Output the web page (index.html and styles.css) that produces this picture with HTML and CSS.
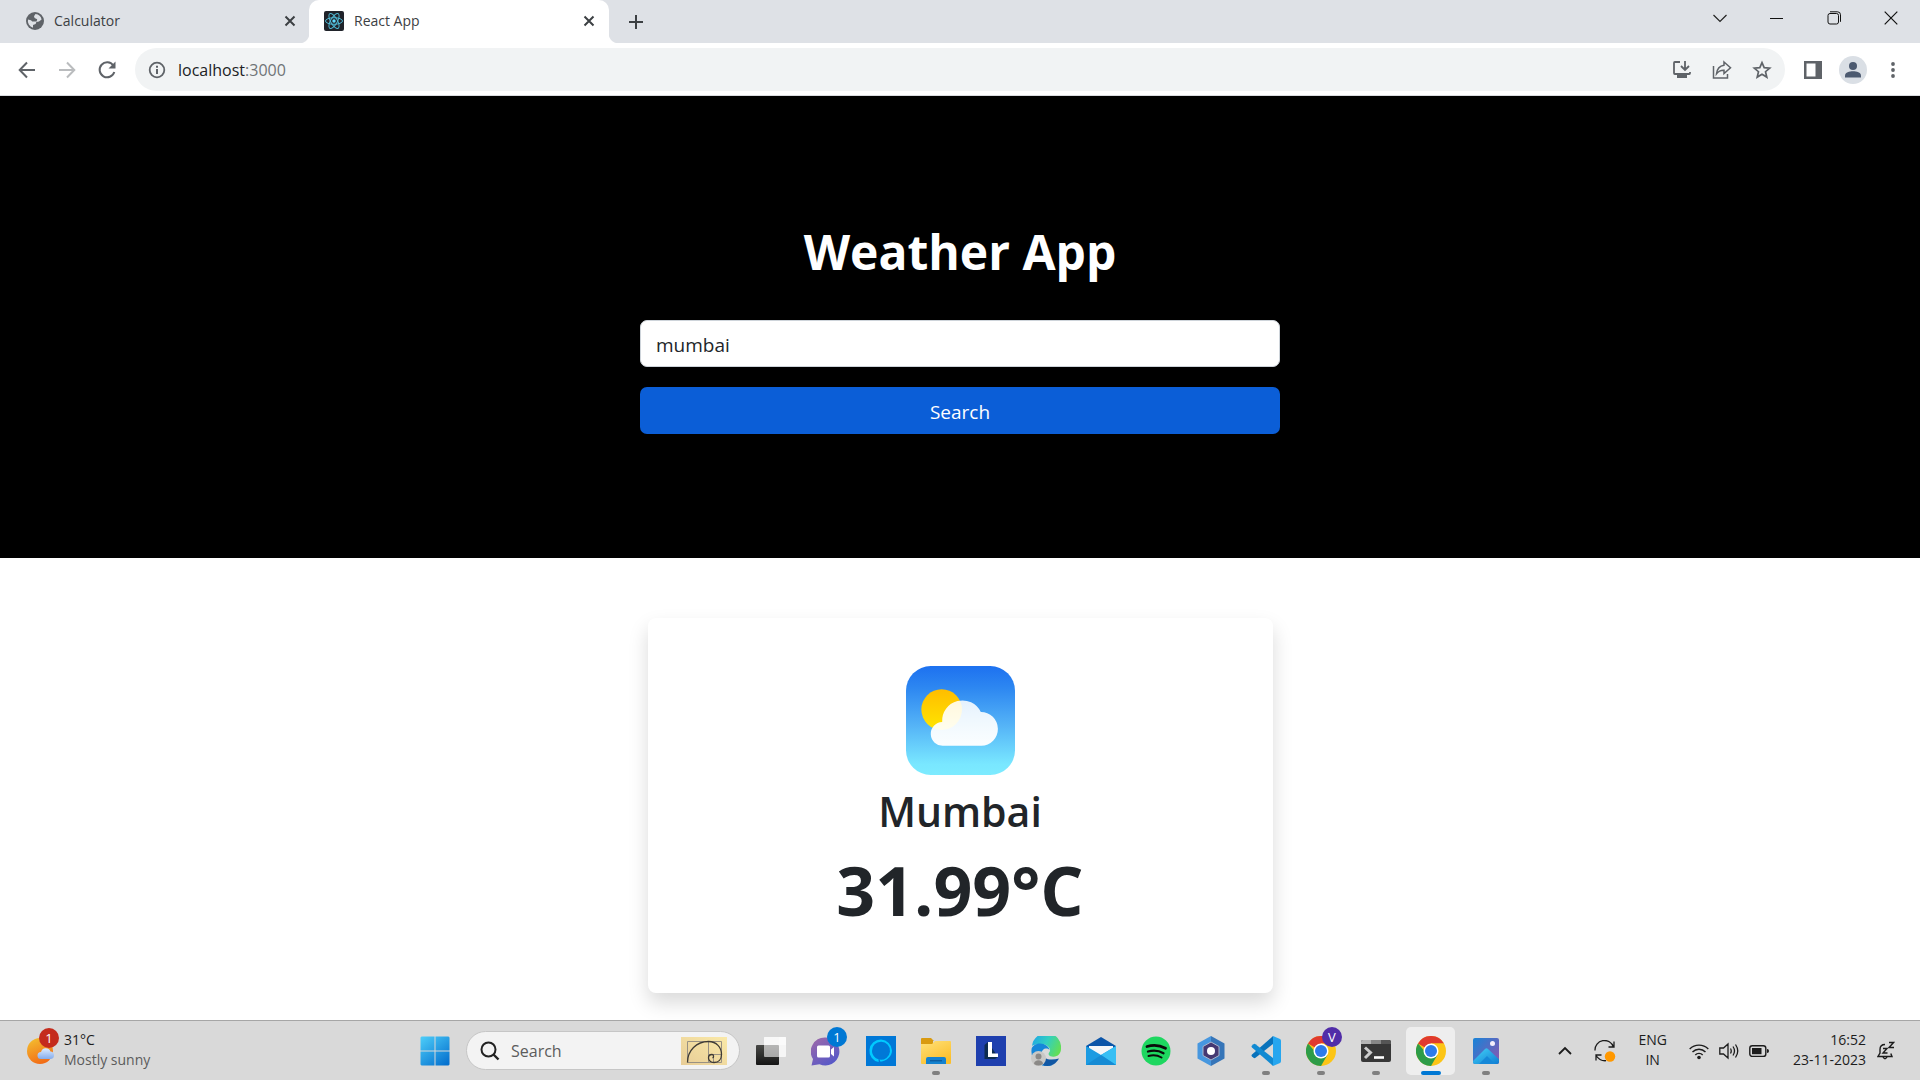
FILE: index.html
```html
<!DOCTYPE html>
<html lang="en">
<head>
<meta charset="utf-8">
<meta name="viewport" content="width=device-width, initial-scale=1">
<title>React App</title>
<link rel="stylesheet" href="styles.css">
</head>
<body>
<header class="browser">
  <div class="tabstrip">
    <div class="tab">
      <svg width="18" height="18" viewBox="0 0 18 18"><circle cx="9" cy="9" r="9" fill="#5f6368"/><path d="M9.500 2 8 4.200 8.600 6l2.600 1.200-.6 2.400H6.200L5 8.200 2 7.400a7 7 0 0 0 5 8.300v-2.600l2.600-1.200.8-1.900 2.600-.6 2.600-1.800A7 7 0 0 0 9.500 2z" fill="#dee1e6"/></svg>
      <span class="tab-title">Calculator</span>
      <button class="tab-close" aria-label="Close Calculator"><svg width="12" height="12" viewBox="0 0 12 12"><path d="M1.500 1.500l9 9M10.500 1.500l-9 9" stroke="#3c4043" stroke-width="2"/></svg></button>
    </div>
    <div class="tab active">
      <svg width="20" height="20" viewBox="0 0 20 20"><rect width="20" height="20" rx="2" fill="#20232a"/><g fill="none" stroke="#4fb8d3" stroke-width="1"><ellipse cx="10" cy="10" rx="8.500" ry="3.300"/><ellipse cx="10" cy="10" rx="8.500" ry="3.300" transform="rotate(60 10 10)"/><ellipse cx="10" cy="10" rx="8.500" ry="3.300" transform="rotate(120 10 10)"/></g><circle cx="10" cy="10" r="1.700" fill="#61dafb"/></svg>
      <span class="tab-title">React App</span>
      <button class="tab-close" aria-label="Close React App"><svg width="12" height="12" viewBox="0 0 12 12"><path d="M1.500 1.500l9 9M10.500 1.500l-9 9" stroke="#3c4043" stroke-width="2"/></svg></button>
    </div>
    <button class="new-tab" aria-label="New tab"><svg width="16" height="16" viewBox="0 0 16 16"><path d="M8 1v14M1 8h14" stroke="#3c4043" stroke-width="2"/></svg></button>
    <div class="window-controls">
      <button aria-label="Search tabs"><svg width="14" height="14" viewBox="0 0 14 14"><path d="M.5 4 7 10.500 13.500 4" fill="none" stroke="#222" stroke-width="1.200"/></svg></button>
      <button aria-label="Minimize"><svg width="14" height="14" viewBox="0 0 14 14"><path d="M0 7.500h13" stroke="#111"/></svg></button>
      <button aria-label="Restore"><svg width="14" height="14" viewBox="0 0 14 14"><g fill="none" stroke="#111"><rect x="1" y="2.500" width="10.500" height="10.500" rx="2"/><path d="M3 .8h7.500a3 3 0 0 1 3 3v7"/></g></svg></button>
      <button aria-label="Close"><svg width="14" height="14" viewBox="0 0 14 14"><path d="M.7.7l12.600 12.600M13.300.7.7 13.300" stroke="#111" stroke-width="1.200"/></svg></button>
    </div>
  </div>
  <div class="toolbar">
    <button class="nav" aria-label="Back"><svg width="20" height="20" viewBox="0 0 20 20"><path d="M18 10H3M10 2.500 2.700 10 10 17.500" fill="none" stroke="#5f6368" stroke-width="2"/></svg></button>
    <button class="nav" aria-label="Forward"><svg width="20" height="20" viewBox="0 0 20 20"><path d="M2 10h15M10 2.500l7.300 7.500L10 17.500" fill="none" stroke="#babcbe" stroke-width="2"/></svg></button>
    <button class="nav" aria-label="Reload"><svg width="20" height="20" viewBox="0 0 20 20"><path d="M16.300 5.500A7.500 7.500 0 1 0 17.300 12" fill="none" stroke="#5f6368" stroke-width="2"/><path d="M18.500 1.500v7h-7z" fill="#5f6368"/></svg></button>
    <div class="omnibox">
      <svg width="18" height="18" viewBox="0 0 18 18"><circle cx="9" cy="9" r="7.300" fill="none" stroke="#5f6368" stroke-width="1.800"/><path d="M9 8v5M9 4.700v2" stroke="#5f6368" stroke-width="2"/></svg>
      <div class="url">localhost<span>:3000</span></div>
      <button aria-label="Install"><svg width="20" height="20" viewBox="0 0 20 20"><g fill="none" stroke="#5f6368" stroke-width="1.800"><path d="M8 2H2.800Q2 2 2 3v10q0 1 .8 1h14.400q.8 0 .8-1v-1M13 1v8M9 6l4 4 4-4"/></g><path d="M5 15h10v3H5z" fill="#5f6368"/></svg></button>
      <button aria-label="Share"><svg width="20" height="20" viewBox="0 0 20 20"><g fill="none" stroke="#5f6368" stroke-width="1.500"><path d="M1.500 6v12h14v-4"/><path d="M12 2l6.500 5.700L12 13.500v-3.300c-3.500-.2-5.500 1-7.500 3.600C5 9.500 7.500 5.800 12 5.200z"/></g></svg></button>
      <button aria-label="Bookmark"><svg width="20" height="20" viewBox="0 0 20 20"><path d="m10 2.600 2.200 5 5.500.5-4.200 3.600 1.300 5.400L10 14.200l-4.800 2.900 1.300-5.400L2.300 8.100l5.500-.5z" fill="none" stroke="#5f6368" stroke-width="1.700"/></svg></button>
    </div>
    <div class="actions">
      <button aria-label="Side panel"><svg width="18" height="18" viewBox="0 0 18 18"><path fill="#5f6368" fill-rule="evenodd" d="M0 0h18v18H0zM2.500 2.500v13h9v-13z"/></svg></button>
      <button aria-label="Profile"><svg width="28" height="28" viewBox="0 0 28 28"><circle cx="14" cy="14" r="14" fill="#dadfe5"/><circle cx="14" cy="10" r="4" fill="#4c5a70"/><path d="M6 21.500v-2c0-3 4.500-4.300 8-4.300s8 1.300 8 4.300v2z" fill="#4c5a70"/></svg></button>
      <button aria-label="Menu"><svg width="18" height="18" viewBox="0 0 18 18"><g fill="#5f6368"><circle cx="9" cy="3" r="1.900"/><circle cx="9" cy="9" r="1.900"/><circle cx="9" cy="15" r="1.900"/></g></svg></button>
    </div>
  </div>
</header>

<main class="page">
  <section class="hero">
    <h1>Weather App</h1>
    <form class="search-form">
      <input type="text" aria-label="City" value="mumbai">
      <button type="button">Search</button>
    </form>
  </section>
  <section class="result">
    <article class="card">
      <svg width="109" height="109" viewBox="0 0 110 110" role="img" aria-label="Partly cloudy">
        <defs>
          <linearGradient id="sky" x2="0" y2="1"><stop stop-color="#1d71f0"/><stop offset=".2" stop-color="#2d87f1"/><stop offset=".55" stop-color="#55b4f7"/><stop offset=".9" stop-color="#79e7ff"/><stop offset="1" stop-color="#7debff"/></linearGradient>
          <linearGradient id="sun" x2="0" y2="1"><stop stop-color="#ffbd00"/><stop offset="1" stop-color="#ffe600"/></linearGradient>
          <linearGradient id="cloud" x2="0" y2="1"><stop stop-color="#fff" stop-opacity=".87"/><stop offset="1" stop-color="#fff" stop-opacity=".97"/></linearGradient>
        </defs>
        <rect width="110" height="110" rx="25" fill="url(#sky)"/>
        <circle cx="36" cy="44" r="20.500" fill="url(#sun)"/>
        <path d="M37.500 80.500a12 12 0 0 1-1-24A20.500 20.500 0 0 1 75.500 46.500A17 17 0 0 1 76 80.500z" fill="url(#cloud)"/>
      </svg>
      <h2>Mumbai</h2>
      <p class="temperature">31.99°C</p>
    </article>
  </section>
</main>

<footer class="taskbar">
  <div class="widget">
    <div class="widget-icon">
      <svg width="28" height="28" viewBox="0 0 28 28"><defs><linearGradient id="tsun" x1=".2" x2=".6" y2="1"><stop stop-color="#f3bd2f"/><stop offset="1" stop-color="#f26a16"/></linearGradient><linearGradient id="tcl" x2="0" y2="1"><stop stop-color="#dcebff"/><stop offset="1" stop-color="#85acec"/></linearGradient></defs><circle cx="13" cy="14" r="13" fill="url(#tsun)"/><path d="M14 22a3.500 3.500 0 0 1 0-7 5 5 0 0 1 9.500-.5A3.800 3.800 0 0 1 24 22z" fill="url(#tcl)"/></svg>
      <span class="badge red">1</span>
    </div>
    <div class="widget-text"><span>31°C</span><span class="muted">Mostly sunny</span></div>
  </div>
  <nav class="apps" aria-label="Apps">
    <button class="app" aria-label="Start"><svg width="30" height="30" viewBox="0 0 30 30"><defs><linearGradient id="win" gradientUnits="userSpaceOnUse" x1="0" y1="0" x2="24" y2="30"><stop stop-color="#4fd0fa"/><stop offset="1" stop-color="#0672cf"/></linearGradient></defs><path fill="url(#win)" d="M1.500.5h13v14H.5v-13zM15.500.5h13l1 1v13h-14zM.5 15.500h14v14h-13l-1-1zM15.500 15.500h14v13l-1 1h-13z"/></svg></button>
    <label class="task-search">
      <svg width="20" height="20" viewBox="0 0 20 20"><circle cx="8.500" cy="8.500" r="7" fill="none" stroke="#222" stroke-width="2"/><path d="m13.500 13.500 5 5" stroke="#222" stroke-width="2.400"/></svg>
      <input type="text" placeholder="Search" aria-label="Search">
      <svg width="46" height="28" viewBox="0 0 46 28"><defs><linearGradient id="gold" x1="1" y1="0" x2="0" y2="1"><stop stop-color="#fae9a8"/><stop offset="1" stop-color="#e8cd97"/></linearGradient></defs><rect width="46" height="28" fill="url(#gold)"/><g fill="none"><path d="M6.500 4.500h34v21h-34zM27.500 4.500v21M27.500 17.500h13M32.500 17.500v8" stroke="#999183"/><path d="M6.500 25.500c0-12 9-21 21-21 8 0 13 6 13 13 0 5-3 8-7.500 8-3 0-5.500-2-5.500-4.500 0-2 1.500-3.500 3.500-3.500s2 3 .5 3.500" stroke="#3e3a34" stroke-width="1.300"/></g></svg>
    </label>
    <button class="app" aria-label="Task view"><svg width="30" height="30" viewBox="0 0 30 30"><defs><linearGradient id="tv" x2="0" y2="1"><stop stop-color="#484946"/><stop offset="1" stop-color="#151515"/></linearGradient></defs><rect y="9" width="23" height="20" rx="1" fill="url(#tv)"/><rect x="8" y="1" width="22" height="20" rx="1" fill="#fff" opacity=".6"/><rect x="23" y="1" width="7" height="20" rx="1" fill="#fff" opacity=".4"/><path d="M8 1h22v8H8z" fill="#fff" opacity=".5"/></svg></button>
    <button class="app" aria-label="Chat"><svg width="30" height="30" viewBox="0 0 30 30"><defs><linearGradient id="chat" x1="0" y1="0" x2=".7" y2="1"><stop stop-color="#a16aa8"/><stop offset="1" stop-color="#5558c8"/></linearGradient></defs><path d="M14 1.500a14 14 0 1 1-5.500 26.700L.5 29.500 2 23A14 14 0 0 1 14 1.500z" fill="url(#chat)"/><rect x="6" y="9.500" width="13" height="12" rx="1.500" fill="#fff"/><path d="m20 13.500 3-2.500v9.500l-3-2.500z" fill="#fff"/></svg><span class="badge blue">1</span></button>
    <button class="app" aria-label="Alexa"><svg width="30" height="30" viewBox="0 0 30 30"><path fill="#0078d7" d="M0 0h30v30H0z"/><path d="M12.700 26A11.300 11.300 0 1 1 26 14.500C26 20.500 20.500 25 14.500 25.700L13.500 23.600A9 9 0 1 0 6 15c0 4 3 7.300 6.500 8.300z" fill="#00caff"/></svg></button>
    <button class="app running" aria-label="File Explorer"><svg width="30" height="30" viewBox="0 0 30 30"><defs><linearGradient id="fold" x2=".6" y2="1"><stop stop-color="#ffe179"/><stop offset="1" stop-color="#fbbf2c"/></linearGradient></defs><path d="M0 3q0-1 1-1h9l3 3h-1v4H0z" fill="#d99a10"/><path d="M0 8h11l3-3h15q1 0 1 1v21q0 1-1 1H1q-1 0-1-1z" fill="url(#fold)"/><path d="M5 28v-5q0-2 2-2h16q2 0 2 2v5z" fill="#1482cf"/><path d="M9 24.800h12" stroke="#0a4e8d"/></svg></button>
    <button class="app" aria-label="L app"><svg width="30" height="30" viewBox="0 0 30 30"><path fill="#1e3fae" d="M0 0h30v30H0z"/><path d="m12 6-3.500 3v14H19l3-2z" fill="#0d2b50"/><path d="M12 6h4v11.500h6V21H12z" fill="#fff"/></svg></button>
    <button class="app" aria-label="Edge"><svg width="30" height="30" viewBox="0 0 30 30"><defs><linearGradient id="ed" x1="0" x2="1" y1=".2" y2=".6"><stop stop-color="#20a7e6"/><stop offset=".5" stop-color="#32cfc0"/><stop offset="1" stop-color="#63de55"/></linearGradient></defs><path d="M1 10A14.500 14.500 0 0 1 30 13c0 5-4 8.500-9 7.500-4-.7-4-3-2.500-4.500C21 12 15 7.500 9 8c-4 0-7 1-8 2z" fill="url(#ed)"/><path d="M.5 14C.5 10 5 7.500 9 7.500c5 0 9 3 9.500 6.500-3-3-8-1-8 4 0 6 6 11 11 11-6 3-12 0-16-2.500A15 15 0 0 1 .5 14z" fill="#1687d9"/><path d="M11 17c0 6 8 8 17 5.500C24.500 29 18 31 13 29.500c-3-3-4-8-2-12.500z" fill="#1157a4"/><circle cx="7.500" cy="22.500" r="7.500" fill="#c9c8c6"/><circle cx="7.500" cy="20.500" r="3" fill="#8b8987"/><path d="M3 28c0-5 9-5 9 0a8 8 0 0 1-9 0z" fill="#8b8987"/></svg></button>
    <button class="app" aria-label="Mail"><svg width="30" height="30" viewBox="0 0 30 30"><path d="M0 10 15 1l15 9v5H0z" fill="#0b55a9"/><path d="M3 10h24v9H3z" fill="#f4f6f9"/><path d="M0 10l15 9 15-9v19H0z" fill="#1c9be2"/><path d="m15 19 15-9v19z" fill="#38bff4"/><path d="m15 19 15 10H0z" fill="#168bd4"/></svg></button>
    <button class="app" aria-label="Spotify"><svg width="30" height="30" viewBox="0 0 30 30"><circle cx="15" cy="15" r="14.500" fill="#1ed760"/><g fill="none" stroke="#0b0b0b" stroke-linecap="round"><path d="M6 10.500c6-1.800 13-1.200 18.500 1.800" stroke-width="2.800"/><path d="M7 15.500c5-1.500 11-1 15.500 1.700" stroke-width="2.300"/><path d="M7.500 20c4.500-1.200 9-.8 13 1.500" stroke-width="2"/></g></svg></button>
    <button class="app" aria-label="Hexagon app"><svg width="30" height="30" viewBox="0 0 30 30"><path d="M15 0 28.500 7.500v15L15 30z" fill="#3675b8"/><path d="M15 0 1.500 7.500v15L15 30z" fill="#4797df"/><path d="M15 6l8 4.500v9L15 24l-8-4.500v-9z" fill="#453972" stroke="#aeb6cb"/><circle cx="15" cy="15" r="4" fill="#fff"/></svg></button>
    <button class="app running" aria-label="Visual Studio Code"><svg width="30" height="30" viewBox="0 0 30 30"><path d="M22 0 1 18.500q-1 1 0 2l1.500 1.300q1 .7 2 0L22 8z" fill="#0872bb"/><path d="M22 30 1 11.500q-1-1 0-2l1.500-1.300q1-.7 2 0L22 22z" fill="#118ad2"/><path d="M22 0l7 3q1 .5 1 2v20q0 1.500-1 2l-7 3z" fill="#26a6ef"/></svg></button>
    <button class="app running" aria-label="Chrome, profile V"><svg width="30" height="30" viewBox="0 0 30 30"><use href="#chrome"/></svg><span class="badge purple">V</span></button>
    <button class="app running" aria-label="Terminal"><svg width="30" height="30" viewBox="0 0 30 30"><path d="M0 6q0-2 2-2h26q2 0 2 2v18q0 2-2 2H2q-2 0-2-2z" fill="#373737"/><path d="M0 8V6q0-2 2-2h8v4z" fill="#b5b5b5"/><path d="M10 4h10v4H10z" fill="#878787"/><path d="M20 4h8q2 0 2 2v2H20z" fill="#555"/><path d="m4 11.500 5.500 5L4 22" fill="none" stroke="#ccc" stroke-width="3"/><path d="M13 21.500h10" stroke="#fff" stroke-width="2.600"/></svg></button>
    <button class="app current" aria-label="Chrome"><svg width="30" height="30" viewBox="0 0 30 30"><g id="chrome"><circle cx="15" cy="15" r="15" fill="#fcc516"/><path d="M15 15 2 7.500A15 15 0 0 1 28 7.500H15z" fill="#e03a2e"/><path d="M15 15H8.500L2 7.500A15 15 0 0 0 15 30l6.500-11.200z" fill="#2d9c48"/><path d="M15 15V7.500h13L21 19z" fill="#fcc516"/><circle cx="15" cy="15" r="7.500" fill="#fff"/><circle cx="15" cy="15" r="6" fill="#2d7be9"/></g></svg></button>
    <button class="app running" aria-label="Photos"><svg width="30" height="30" viewBox="0 0 30 30"><defs><linearGradient id="ph" x2="1" y2=".8"><stop stop-color="#1684d8"/><stop offset="1" stop-color="#8459b2"/></linearGradient><linearGradient id="mt" x2="1" y2="1"><stop stop-color="#45d4f8"/><stop offset="1" stop-color="#0872ce"/></linearGradient><clipPath id="pc"><rect x="2" y="2" width="26" height="26" rx="2"/></clipPath></defs><g clip-path="url(#pc)"><path fill="url(#ph)" d="M2 2h26v26H2z"/><path d="m2 25 12-12q1.500-1.500 3 0l14 13v4H2z" fill="url(#mt)"/><path d="m8 28 8-8 8 8z" fill="#1688d8"/></g><circle cx="21.500" cy="7.500" r="2.500" fill="#f5eefb"/></svg></button>
  </nav>
  <div class="tray">
    <button class="tray-chevron" aria-label="Show hidden icons"><svg width="14" height="14" viewBox="0 0 14 14"><path d="m1 10 6-6 6 6" fill="none" stroke="#1c1c1c" stroke-width="1.800"/></svg></button>
    <button class="tray-sync" aria-label="Updates"><svg width="22" height="22" viewBox="0 0 22 22"><g fill="none" stroke="#1c1c1c" stroke-width="1.300"><path d="M1 10.500A9.500 9.500 0 0 1 19.500 7M20 1.500V7h-5.500M2 20.500V15h5.500M2 15.500c3 4.500 6 5.500 10 5.200"/></g><circle cx="16" cy="16.500" r="5.200" fill="#ff9800"/></svg></button>
    <div class="lang"><span>ENG</span><span>IN</span></div>
    <div class="status">
      <svg width="20" height="20" viewBox="0 0 20 20"><g fill="none" stroke="#1c1c1c" stroke-width="1.400"><path d="M.7 8a13 13 0 0 1 18.600 0M3.500 11a9 9 0 0 1 13 0M6.300 14a5 5 0 0 1 7.400 0"/></g><circle cx="10" cy="16.500" r="1.800" fill="#1c1c1c"/></svg>
      <svg width="20" height="20" viewBox="0 0 20 20"><g fill="none" stroke="#1c1c1c" stroke-width="1.300"><path d="M.8 7v6h3.700L9 17V3L4.500 7zM11.500 7.500q1.500 2.500 0 5M14 5.500q3 4.500 0 9M16.500 3.500q4.500 6.500 0 13"/></g></svg>
      <svg width="20" height="20" viewBox="0 0 20 20"><rect x=".8" y="4.800" width="16" height="10.600" rx="2.500" fill="none" stroke="#1c1c1c" stroke-width="1.400"/><rect x="3" y="7" width="9.500" height="6.200" fill="#1c1c1c"/><path d="M18 8q2 0 2 2t-2 2z" fill="#1c1c1c"/></svg>
    </div>
    <div class="clock"><span>16:52</span><span>23-11-2023</span></div>
    <svg width="18" height="20" viewBox="0 0 18 20"><g fill="none" stroke="#1c1c1c" stroke-width="1.400"><path d="M8 3.500C5 3.500 3 5.500 3 8.500V12l-2 3.500h14L13.800 12.500M6 16q2 3.500 4 0"/><path d="M6 7.500h4L6 12h4.500M12 1.500h4.500L12 6.500h5"/></g></svg>
  </div>
</footer>
</body>
</html>
```
FILE: styles.css
```css
* { box-sizing: border-box; }

body {
  margin: 0;
  min-height: 100vh;
  display: flex;
  flex-direction: column;
  background: #fff;
  color: #212529;
  font-family: "Open Sans", "Noto Sans", sans-serif;
}

button, input {
  font: inherit;
  color: inherit;
  border: 0;
  padding: 0;
  background: none;
}

button {
  display: flex;
  align-items: center;
  justify-content: center;
}

svg { flex: none; display: block; }

/* Browser frame */
.browser { border-bottom: 1px solid #dadce0; }

.tabstrip {
  display: flex;
  height: 43px;
  background: #dee1e6;
}

.tab {
  display: flex;
  align-items: center;
  width: 300px;
  padding: 0 13px 2px 15px;
  font-size: 14px;
  color: #3c4043;
}

.tab:first-child { width: 309px; padding: 0 12px 2px 26px; }

.tab.active {
  position: relative;
  background: #fff;
  border-radius: 10px 10px 0 0;
}

.tab.active::before,
.tab.active::after {
  content: "";
  position: absolute;
  bottom: 0;
  width: 10px;
  height: 10px;
}

.tab.active::before { right: 100%; background: radial-gradient(circle at 0 0, transparent 10px, #fff 11px); }
.tab.active::after { left: 100%; background: radial-gradient(circle at 100% 0, transparent 10px, #fff 11px); }

.tab-title { flex: 1; margin-left: 10px; }
.tab-close { width: 14px; height: 14px; }
.new-tab { width: 54px; }

.window-controls { display: flex; margin-left: auto; padding-right: 1px; }
.window-controls button { width: 57px; padding-bottom: 7px; }

.toolbar {
  display: flex;
  align-items: center;
  height: 52px;
  padding: 1px 0 0 7px;
}

.nav { width: 40px; height: 40px; }

.omnibox {
  flex: 1;
  display: flex;
  align-items: center;
  height: 43px;
  margin-left: 8px;
  padding: 0 3px 0 13px;
  border-radius: 22px;
  background: #f1f3f4;
}

.omnibox button { width: 40px; height: 40px; }
.url { flex: 1; margin-left: 12px; font-size: 16px; color: #202124; }
.url span { color: #6f7377; }

.actions { display: flex; align-items: center; padding: 0 7px 0 8px; }
.actions button { width: 40px; height: 40px; }

/* Weather page */
.page { flex: 1; }

.hero {
  display: flex;
  flex-direction: column;
  align-items: center;
  gap: 36px;
  padding: 124px 20px;
  background: #000;
  color: #fff;
}

h1, h2, p { margin: 0; }

h1 { font-size: 48px; line-height: 64px; font-weight: 700; }

.search-form {
  display: grid;
  gap: 20px;
  width: 100%;
  max-width: 640px;
  font-size: 19px;
}

.search-form input,
.search-form button {
  width: 100%;
  height: 47px;
  padding: 2px 15px 0;
  border-radius: 7px;
}

.search-form input {
  border: 1px solid #ced4da;
  background: #fff;
  color: #212529;
}

.search-form button { background: #0b5ed7; color: #fff; }

.result { display: flex; justify-content: center; padding: 60px 20px 27px; }

.card {
  display: flex;
  flex-direction: column;
  align-items: center;
  width: 100%;
  max-width: 625px;
  padding: 48px 20px 60px;
  border-radius: 8px;
  background: #fff;
  box-shadow: 0 10px 20px rgba(0, 0, 0, .15);
}

h2 { margin-top: 8px; font-size: 41px; line-height: 56px; font-weight: 600; }
.temperature { margin-top: 8px; font-size: 68px; line-height: 86px; font-weight: 700; }

/* Taskbar */
.taskbar {
  display: grid;
  grid-template-columns: 1fr auto 1fr;
  align-items: center;
  height: 60px;
  border-top: 1px solid #a6a6a6;
  background: #d9d9d9;
  font-size: 14px;
  line-height: 20px;
  color: #1c1c1c;
}

.widget { display: flex; align-items: center; gap: 9px; padding-left: 27px; }
.widget-icon { position: relative; }
.widget-text, .lang, .clock { display: flex; flex-direction: column; padding-bottom: 2px; }
.muted { color: #5c5c5c; }

.badge {
  position: absolute;
  width: 20px;
  height: 20px;
  border-radius: 50%;
  color: #fff;
  font-size: 13px;
  line-height: 20px;
  text-align: center;
}

.red { top: -9px; left: 12px; background: #c42b1c; }
.blue, .purple { top: 0; right: 6px; }
.blue { background: #0078d4; }
.purple { background: #512da8; }

.apps { display: flex; align-items: center; height: 100%; }
.app { position: relative; width: 55px; height: 48px; }

.running::after,
.current::after {
  content: "";
  position: absolute;
  bottom: 0;
  width: 8px;
  height: 4px;
  border-radius: 2px;
  background: #808080;
}

.current::before {
  content: "";
  position: absolute;
  inset: 0 3px;
  z-index: -1;
  border-radius: 5px;
  background: #eee;
}

.current { z-index: 0; }
.current::after { width: 20px; background: #0078d4; }

.task-search {
  display: flex;
  align-items: center;
  width: 274px;
  height: 39px;
  margin: 0 3px 0 4px;
  padding: 0 12px 0 13px;
  border: 1px solid #c6c6c6;
  border-radius: 20px;
  background: #f3f3f3;
}

.task-search input { flex: 1; min-width: 0; margin-left: 11px; font-size: 16px; }
.task-search input::placeholder { color: #5c5c5c; opacity: 1; }

.tray { display: flex; align-items: center; justify-content: flex-end; padding-right: 25px; }
.tray-chevron { width: 20px; margin-right: 19px; }
.tray-sync { width: 22px; }
.lang { align-items: center; margin: 0 22px 0 22px; }
.status { display: flex; gap: 10px; margin-right: 24px; }
.clock { align-items: flex-end; margin-right: 11px; }
```
